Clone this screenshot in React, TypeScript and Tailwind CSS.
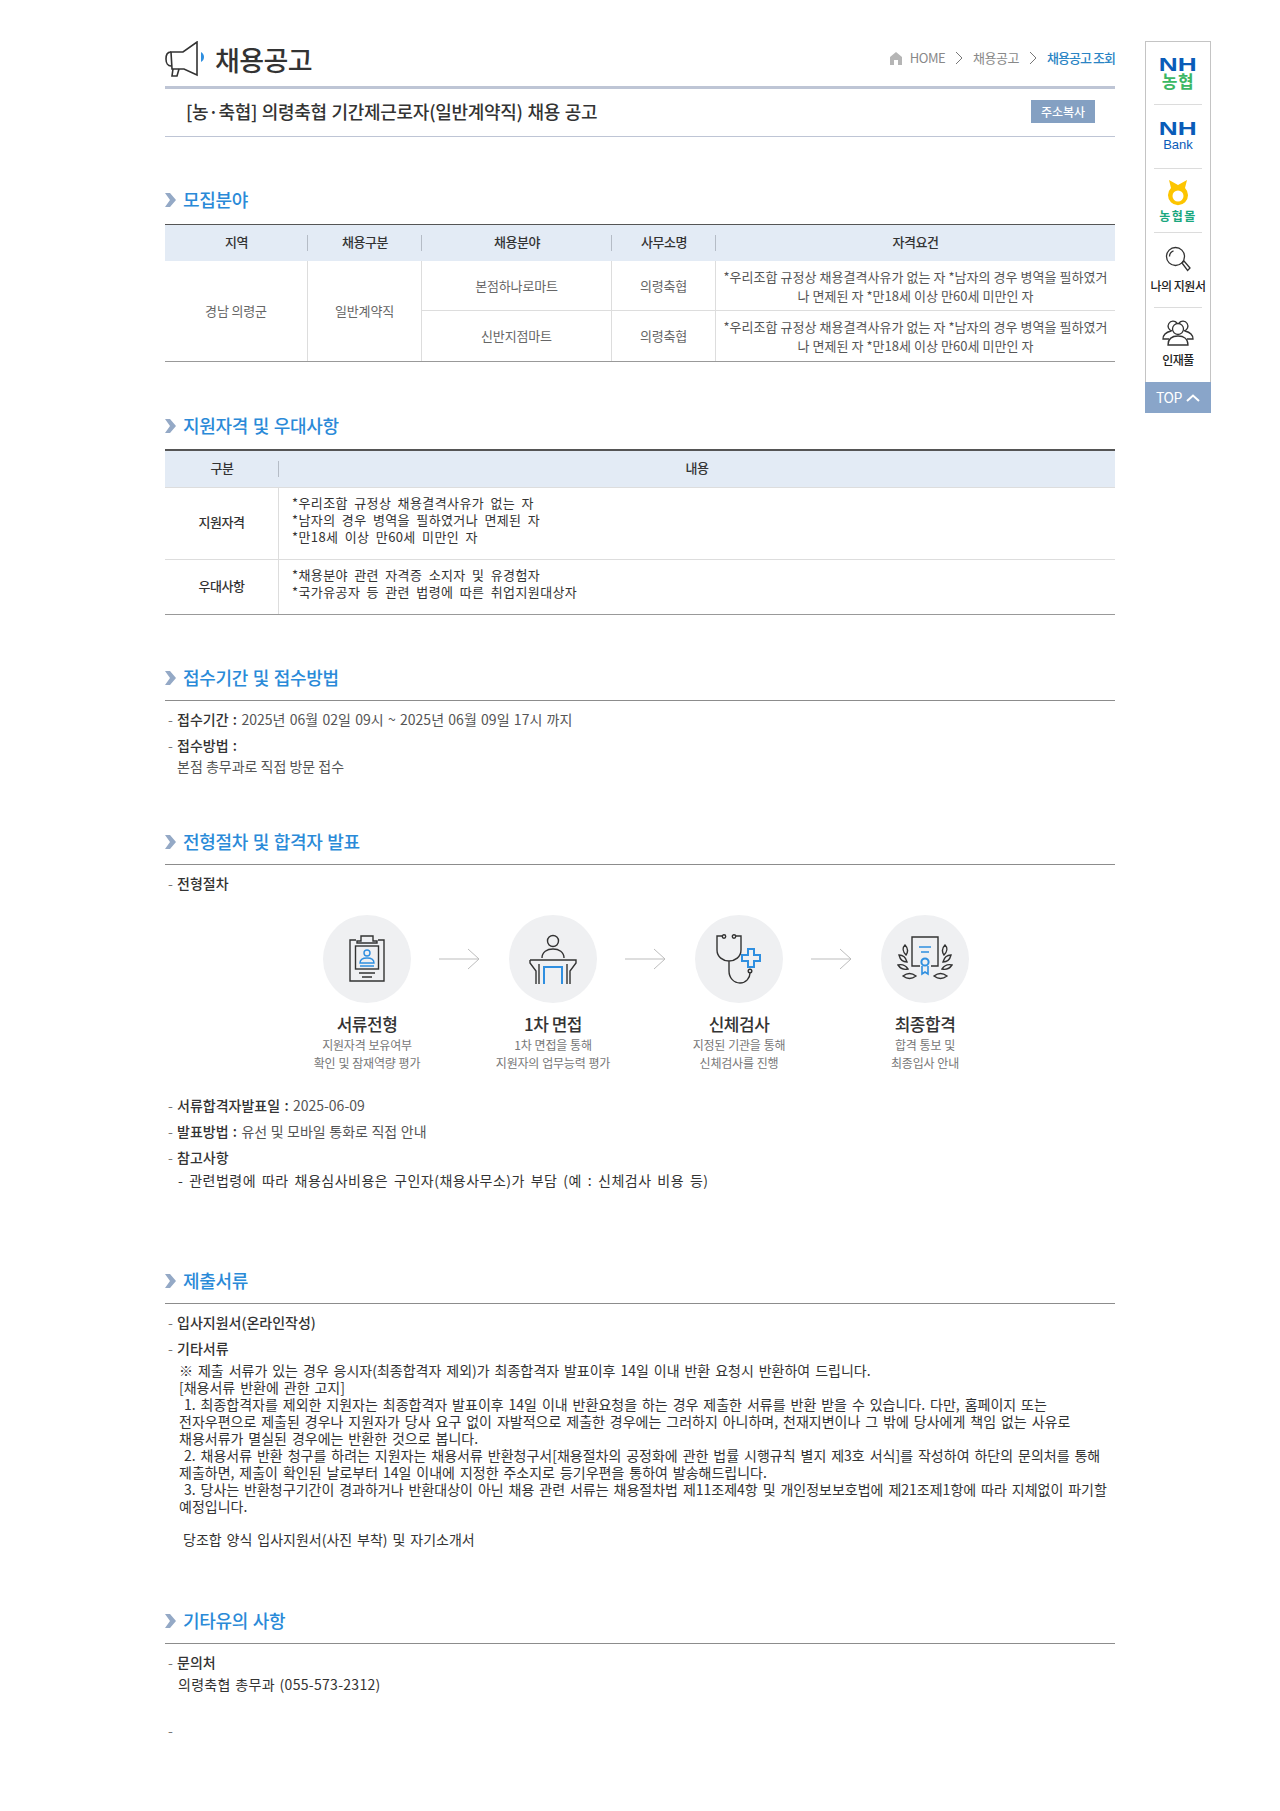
import type { ReactNode } from "react";

const kr = "font-['Noto_Sans_CJK_KR','Noto_Sans',sans-serif]";
const longText = "text-[14px] leading-[17px] [word-spacing:1.8px] text-[#333]";

function SectionTitle({ children, line = true }: { children: ReactNode; line?: boolean }) {
  return (
    <div className={`flex h-[34px] items-start ${line ? "border-b border-[#8c8c8c]" : ""}`}>
      <svg width="11" height="14" viewBox="0 0 11 14" className={`shrink-0 ${line ? "mt-[4px]" : "mt-[6px]"}`}>
        <path d="M0 0h5l6 7-6 7H0l5-7z" fill="#94a9c6" />
      </svg>
      <h2 className={`ml-[7px] text-[18px] leading-[24px] font-medium tracking-[-0.3px] [word-spacing:1px] text-[#2a8ad8] ${line ? "-mt-[2px]" : ""}`}>{children}</h2>
    </div>
  );
}

function Bullet({ children, className = "" }: { children: ReactNode; className?: string }) {
  return (
    <div className={`flex text-[14px] leading-[26px] [word-spacing:1.2px] ${className}`}>
      <span className="ml-[3px] w-[9px] shrink-0 text-[#777]">-</span>
      <div className="text-[#555]">{children}</div>
    </div>
  );
}

function Th({ children, last = false }: { children: ReactNode; last?: boolean }) {
  return (
    <div className="relative flex items-center justify-center pb-[2px] text-[13px] font-medium tracking-[-0.5px] text-[#333]">
      {children}
      {!last && <span className="absolute top-1/2 right-0 h-[16px] w-px -translate-y-1/2 bg-[#b5bcc6]" />}
    </div>
  );
}

function Arrow() {
  return (
    <svg width="42" height="22" viewBox="0 0 42 22" className="mx-[28px] mt-[33px] shrink-0">
      <path d="M0 11h40M29 1l11 10-11 10" fill="none" stroke="#bdbdbd" strokeWidth="1" />
    </svg>
  );
}

function Step({ icon, title, lines }: { icon: ReactNode; title: string; lines: [string, string] }) {
  return (
    <div className="flex w-[88px] flex-col items-center">
      <div className="flex h-[88px] w-[88px] items-center justify-center rounded-full bg-[#eff0f2]">{icon}</div>
      <div className="mt-[9px] text-[17px] leading-[24px] font-medium tracking-[-0.5px] whitespace-nowrap text-[#333]">{title}</div>
      <div className="text-center text-[12px] leading-[18px] tracking-[-0.2px] [word-spacing:0.5px] whitespace-nowrap text-[#777]">
        {lines[0]}
        <br />
        {lines[1]}
      </div>
    </div>
  );
}

const dark = "#333";
const blue = "#2f8fe0";

function ClipboardIcon() {
  return (
    <svg width="36" height="48" viewBox="0 0 36 48" fill="none" strokeWidth="1.4">
      <path d="M7 5H1v41h34V5h-6" stroke={dark} />
      <path d="M12 6V1h12v5h4v2H8V6z" stroke={dark} />
      <rect x="6.5" y="11" width="23" height="23" stroke={dark} />
      <circle cx="18" cy="18" r="3" stroke={blue} />
      <path d="M11 28c0-4 3-5 7-5s7 1 7 5zM11 31h14" stroke={blue} />
      <path d="M10 38h16M13 42h10" stroke={dark} />
    </svg>
  );
}

function PodiumIcon() {
  return (
    <svg width="48" height="50" viewBox="0 0 48 50" fill="none" strokeWidth="1.4">
      <circle cx="24" cy="7" r="5.5" stroke={dark} />
      <path d="M13 24c0-6 5-9 11-9s11 3 11 9" stroke={dark} />
      <path d="M1 26h46v3l-6 8v13M1 26v3l6 8v13M10 30v20M38 30v20" stroke={dark} />
      <path d="M15 50V33h18v17" stroke={blue} strokeWidth="2" />
    </svg>
  );
}

function StethoscopeIcon() {
  return (
    <svg width="46" height="50" viewBox="0 0 46 50" fill="none" strokeWidth="1.4">
      <path d="M6 2H1v14c0 7 6 11 12 11s12-4 12-11V2h-5M13 27v10c0 7 5 12 11 12s10-5 10-10" stroke={dark} />
      <circle cx="8" cy="2.5" r="1.7" stroke={dark} />
      <circle cx="18" cy="2.5" r="1.7" stroke={dark} />
      <circle cx="34" cy="37" r="1.8" stroke={dark} />
      <path d="M32 15h6v6h6v6h-6v6h-6v-6h-6v-6h6z" stroke={blue} strokeWidth="2" />
    </svg>
  );
}

function DiplomaIcon() {
  return (
    <svg width="56" height="46" viewBox="0 0 56 46" fill="none" strokeWidth="1.4">
      <path d="M23 30h-8V1h26v29h-7" stroke={dark} />
      <path d="M22 11h12M24 16h8" stroke={blue} />
      <circle cx="28" cy="26" r="3.6" stroke={blue} strokeWidth="2" />
      <path d="M25 30v8l3-2 3 2v-8" stroke={blue} strokeWidth="1.6" />
      <path d="M8 9c3 3 3 7 1 10-3-3-4-7-1-10zM48 9c-3 3-3 7-1 10 3-3 4-7 1-10zM2 19c4 0 7 3 8 7-4 0-7-3-8-7zM54 19c-4 0-7 3-8 7 4 0 7-3 8-7zM1 29c4-1 8 1 10 4-4 1-8-1-10-4zM55 29c-4-1-8 1-10 4 4 1 8-1 10-4zM6 40c4-3 9-3 13 0-4 3-9 3-13 0zM50 40c-4-3-9-3-13 0 4 3 9 3 13 0z" stroke={dark} />
    </svg>
  );
}

function NhMark() {
  return <span className="scale-x-[1.38] font-['Liberation_Sans',sans-serif] text-[19px] leading-[15px] font-bold text-[#0a5cb8]">NH</span>;
}

function QuickMenu() {
  return (
    <aside className="absolute top-[41px] left-[1145px] w-[66px] border-x border-t border-[#c4c4c4] bg-white text-center">
      <div className="mx-[8px] flex h-[63px] flex-col items-center justify-center gap-[1px] border-b border-[#dcdcdc]">
        <NhMark />
        <span className="text-[17px] leading-[16px] font-bold tracking-[0.5px] text-[#3cb764]">농협</span>
      </div>
      <div className="mx-[8px] flex h-[64px] flex-col items-center justify-center gap-[2px] border-b border-[#dcdcdc]">
        <NhMark />
        <span className="font-['Liberation_Sans',sans-serif] text-[13px] leading-[14px] text-[#0a5cb8]">Bank</span>
      </div>
      <div className="mx-[8px] flex h-[64px] flex-col items-center justify-center border-b border-[#dcdcdc]">
        <svg width="24" height="27" viewBox="0 0 24 27">
          <path d="M3 0l9 5 9-5-2 8a10 10 0 1 1-14 0z" fill="#fdc500" />
          <circle cx="12" cy="16" r="5.5" fill="#fff" />
        </svg>
        <span className="mt-[2px] text-[12px] leading-[13px] font-bold tracking-[1.5px] text-[#1aa77e]">농협몰</span>
      </div>
      <div className="mx-[8px] flex h-[75px] flex-col items-center justify-center border-b border-[#dcdcdc] pb-[2px]">
        <svg width="26" height="28" viewBox="0 0 26 28" fill="none" stroke="#333" strokeWidth="1.3">
          <circle cx="10.5" cy="10.5" r="9" />
          <path d="M4.5 10.5a6 6 0 0 1 4-5.6" />
          <path d="M17 17l2-2 6 7-2.4 2.4z" />
        </svg>
        <span className="mt-[5px] text-[12px] leading-[14px] font-medium tracking-[-0.5px] whitespace-nowrap text-[#222]">나의 지원서</span>
      </div>
      <div className="flex h-[74px] flex-col items-center justify-center pb-[3px]">
        <svg width="32" height="26" viewBox="0 0 32 26" fill="none" stroke="#333" strokeWidth="1.3">
          <path d="M10 11a5 5 0 1 1 5-8M22 11a5 5 0 1 0-5-8" />
          <path d="M9 11c-4 1-8 3-8 8h6M23 11c4 1 8 3 8 8h-6" />
          <circle cx="16" cy="9" r="5.5" />
          <path d="M6 25c0-6 4-9 10-9s10 3 10 9z" />
        </svg>
        <span className="mt-[7px] text-[12px] leading-[14px] font-medium tracking-[-0.5px] text-[#222]">인재풀</span>
      </div>
      <div className="-mx-px flex h-[31px] items-center justify-center gap-[4px] bg-[#89a5c9] text-[14px] tracking-[-0.5px] text-white">
        TOP
        <svg width="14" height="8" viewBox="0 0 14 8" fill="none" stroke="#fff" strokeWidth="2">
          <path d="M1 7l6-5.5L13 7" />
        </svg>
      </div>
    </aside>
  );
}

const cols1 = "grid-cols-[143px_114px_190px_104px_399px]";
const qualLines = "flex items-center justify-center text-center leading-[19px] tracking-[0.05px] whitespace-nowrap text-[#555]";

export default function App() {
  return (
    <div className={`relative min-h-[1811px] w-[1280px] bg-white ${kr}`}>
      <QuickMenu />
      <div className="ml-[165px] w-[950px] pt-[40px]">
        {/* page head */}
        <div className="box-content flex h-[46px] items-start justify-between border-b-[3px] border-[#bec5d5]">
          <div className="flex items-center">
            <svg width="40" height="36" viewBox="0 0 40 36" fill="none" strokeWidth="1.6" stroke="#333">
              <path d="M32 1v33L19 28H7l-1-17h12z" />
              <path d="M6 11c-4 0-5 3-5 7s2 7 5 7M8 28l-1 7h5l2-7" />
              <path d="M36 11c2 1 3 3 3 5s-1 4-3 5z" fill="#2f8fe0" stroke="none" />
            </svg>
            <h1 className="mt-[2px] ml-[10px] text-[27px] leading-[36px] font-medium tracking-[-0.6px] text-[#333]">채용공고</h1>
          </div>
          <div className="mt-[8px] flex items-center text-[13px] leading-[20px] tracking-[-0.5px] text-[#888]">
            <svg width="12" height="13" viewBox="0 0 12 13" fill="#b5b5b5"><path d="M6 0l6 5v8H8V8H4v5H0V5z" /></svg>
            <span className="ml-[8px]">HOME</span>
            <svg width="8" height="14" viewBox="0 0 8 14" fill="none" stroke="#777" className="mx-[10px]"><path d="M1 1l6 6-6 6" /></svg>
            <span>채용공고</span>
            <svg width="8" height="14" viewBox="0 0 8 14" fill="none" stroke="#777" className="mx-[10px]"><path d="M1 1l6 6-6 6" /></svg>
            <span className="font-medium tracking-[-0.95px] text-[#2a84c4]">채용공고 조회</span>
          </div>
        </div>
        <div className="flex h-[48px] items-center justify-between border-b border-[#bec5d5] pr-[20px] pl-[21px]">
          <h3 className="-mt-[3px] text-[18px] font-medium tracking-[-0.3px] [word-spacing:1px] text-[#333]">[농·축협] 의령축협 기간제근로자(일반계약직) 채용 공고</h3>
          <button className="-mt-[2px] h-[23px] w-[64px] bg-[#84a0c2] text-[12px] font-medium text-white">주소복사</button>
        </div>

        {/* 모집분야 */}
        <div className="mt-[50px]">
          <SectionTitle line={false}>모집분야</SectionTitle>
        </div>
        <div className="mt-[3px] border-y border-t-[#555] border-b-[#999]">
          <div className={`grid h-[36px] ${cols1} bg-[#e3ebf5]`}>
            <Th>지역</Th>
            <Th>채용구분</Th>
            <Th>채용분야</Th>
            <Th>사무소명</Th>
            <Th last>자격요건</Th>
          </div>
          <div className={`grid ${cols1} text-[13px] tracking-[-0.15px] text-[#666]`}>
            <div className="row-span-2 flex items-center justify-center border-r border-[#ddd]">경남 의령군</div>
            <div className="row-span-2 flex items-center justify-center border-r border-[#ddd]">일반계약직</div>
            <div className="flex h-[50px] items-center justify-center border-r border-b border-[#ddd]">본점하나로마트</div>
            <div className="flex items-center justify-center border-r border-b border-[#ddd]">의령축협</div>
            <div className={`border-b border-[#ddd] ${qualLines}`}>
              *우리조합 규정상 채용결격사유가 없는 자 *남자의 경우 병역을 필하였거
              <br />나 면제된 자 *만18세 이상 만60세 미만인 자
            </div>
            <div className="flex h-[50px] items-center justify-center border-r border-[#ddd]">신반지점마트</div>
            <div className="flex items-center justify-center border-r border-[#ddd]">의령축협</div>
            <div className={qualLines}>
              *우리조합 규정상 채용결격사유가 없는 자 *남자의 경우 병역을 필하였거
              <br />나 면제된 자 *만18세 이상 만60세 미만인 자
            </div>
          </div>
        </div>

        {/* 지원자격 */}
        <div className="mt-[51px]">
          <SectionTitle line={false}>지원자격 및 우대사항</SectionTitle>
        </div>
        <div className="mt-[2px] border-t-2 border-b border-t-[#555] border-b-[#999]">
          <div className="grid h-[37px] grid-cols-[114px_836px] border-b border-[#ddd] bg-[#e3ebf5]">
            <Th>구분</Th>
            <Th last>내용</Th>
          </div>
          <div className="grid grid-cols-[114px_836px] text-[13px] text-[#333]">
            <div className="flex h-[72px] items-center justify-center border-r border-b border-[#ddd] pb-[3px] font-medium tracking-[-0.5px]">지원자격</div>
            <div className="border-b border-[#ddd] pt-[6px] pl-[13px] leading-[17px] tracking-[0.4px] [word-spacing:3px]">
              *우리조합 규정상 채용결격사유가 없는 자
              <br />
              *남자의 경우 병역을 필하였거나 면제된 자
              <br />
              *만18세 이상 만60세 미만인 자
            </div>
            <div className="flex h-[54px] items-center justify-center border-r border-[#ddd] pb-[2px] font-medium tracking-[-0.5px]">우대사항</div>
            <div className="pt-[6px] pl-[13px] leading-[17px] tracking-[0.4px] [word-spacing:3px]">
              *채용분야 관련 자격증 소지자 및 유경험자
              <br />
              *국가유공자 등 관련 법령에 따른 취업지원대상자
            </div>
          </div>
        </div>

        {/* 접수기간 */}
        <div className="mt-[52px]">
          <SectionTitle>접수기간 및 접수방법</SectionTitle>
        </div>
        <Bullet className="mt-[5px]">
          <b className="font-medium text-[#333]">접수기간 :</b> 2025년 06월 02일 09시 ~ 2025년 06월 09일 17시 까지
        </Bullet>
        <Bullet>
          <b className="font-medium text-[#333]">접수방법 :</b>
          <div className="-mt-[1px] leading-[18px] [word-spacing:0]">본점 총무과로 직접 방문 접수</div>
        </Bullet>

        {/* 전형절차 */}
        <div className="mt-[56px]">
          <SectionTitle>전형절차 및 합격자 발표</SectionTitle>
        </div>
        <Bullet className="mt-[5px]">
          <b className="font-medium text-[#333]">전형절차</b>
        </Bullet>
        <div className="mt-[19px] ml-[158px] flex items-start">
          <Step icon={<ClipboardIcon />} title="서류전형" lines={["지원자격 보유여부", "확인 및 잠재역량 평가"]} />
          <Arrow />
          <Step icon={<PodiumIcon />} title="1차 면접" lines={["1차 면접을 통해", "지원자의 업무능력 평가"]} />
          <Arrow />
          <Step icon={<StethoscopeIcon />} title="신체검사" lines={["지정된 기관을 통해", "신체검사를 진행"]} />
          <Arrow />
          <Step icon={<DiplomaIcon />} title="최종합격" lines={["합격 통보 및", "최종입사 안내"]} />
        </div>
        <Bullet className="mt-[20px]">
          <b className="font-medium text-[#333]">서류합격자발표일 :</b> 2025-06-09
        </Bullet>
        <Bullet>
          <b className="font-medium text-[#333]">발표방법 :</b> <span className="[word-spacing:0.4px]">유선 및 모바일 통화로 직접 안내</span>
        </Bullet>
        <Bullet>
          <b className="font-medium text-[#333]">참고사항</b>
          <div className="mt-[1px] ml-[1px] leading-[18px] tracking-[0.5px] [word-spacing:2.2px] text-[#333]">- 관련법령에 따라 채용심사비용은 구인자(채용사무소)가 부담 (예 : 신체검사 비용 등)</div>
        </Bullet>

        {/* 제출서류 */}
        <div className="mt-[81px]">
          <SectionTitle>제출서류</SectionTitle>
        </div>
        <Bullet className="mt-[5px]">
          <b className="font-medium text-[#333]">입사지원서(온라인작성)</b>
        </Bullet>
        <Bullet>
          <b className="font-medium text-[#333]">기타서류</b>
        </Bullet>
        <div className={`mt-[1px] ml-[14px] whitespace-nowrap ${longText}`}>
          ※ 제출 서류가 있는 경우 응시자(최종합격자 제외)가 최종합격자 발표이후 14일 이내 반환 요청시 반환하여 드립니다.
          <br />
          [채용서류 반환에 관한 고지]
          <br />
          &nbsp;1. 최종합격자를 제외한 지원자는 최종합격자 발표이후 14일 이내 반환요청을 하는 경우 제출한 서류를 반환 받을 수 있습니다. 다만, 홈페이지 또는
          <br />
          전자우편으로 제출된 경우나 지원자가 당사 요구 없이 자발적으로 제출한 경우에는 그러하지 아니하며, 천재지변이나 그 밖에 당사에게 책임 없는 사유로
          <br />
          채용서류가 멸실된 경우에는 반환한 것으로 봅니다.
          <br />
          &nbsp;2. 채용서류 반환 청구를 하려는 지원자는 채용서류 반환청구서[채용절차의 공정화에 관한 법률 시행규칙 별지 제3호 서식]를 작성하여 하단의 문의처를 통해
          <br />
          제출하면, 제출이 확인된 날로부터 14일 이내에 지정한 주소지로 등기우편을 통하여 발송해드립니다.
          <br />
          &nbsp;3. 당사는 반환청구기간이 경과하거나 반환대상이 아닌 채용 관련 서류는 채용절차법 제11조제4항 및 개인정보보호법에 제21조제1항에 따라 지체없이 파기할
          <br />
          예정입니다.
        </div>
        <div className={`mt-[16px] ml-[18px] ${longText}`}>당조합 양식 입사지원서(사진 부착) 및 자기소개서</div>

        {/* 기타유의 */}
        <div className="mt-[62px]">
          <SectionTitle>기타유의 사항</SectionTitle>
        </div>
        <Bullet className="mt-[5px]">
          <b className="font-medium text-[#333]">문의처</b>
          <div className="ml-[1px] leading-[18px] tracking-[0.3px] text-[#333]">의령축협 총무과 (055-573-2312)</div>
        </Bullet>
        <div className="mt-[27px] ml-[3px] text-[14px] leading-[20px] text-[#777]">-</div>
      </div>
    </div>
  );
}
